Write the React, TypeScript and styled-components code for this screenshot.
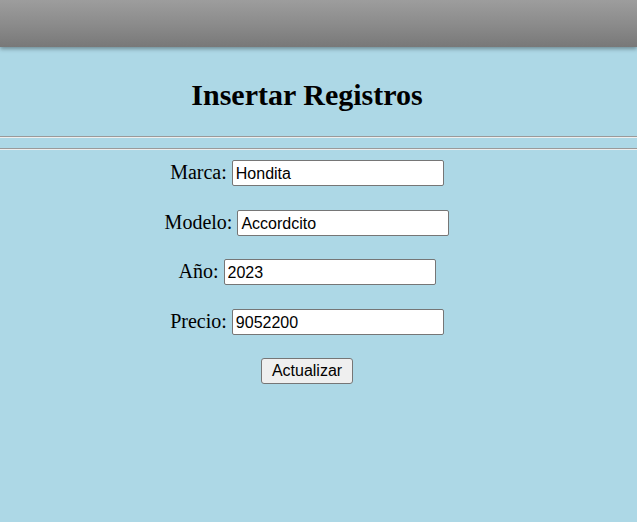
import React from "react";
import styled, { createGlobalStyle } from "styled-components";

const Global = createGlobalStyle`
  html, body {
    margin: 0;
    padding: 0;
    background: #add8e6;
    font-family: "Liberation Serif", "Times New Roman", serif;
  }
`;

const Header = styled.header`
  height: 47px;
  background: linear-gradient(to bottom, #9d9d9d 0%, #8a8a8a 55%, #787878 100%);
  box-shadow: 0 2px 4px rgba(0, 0, 0, 0.35);
  position: relative;
  z-index: 1;
`;

const TitleSection = styled.div`
  padding: 29px 23px 0 0;
  display: flex;
  justify-content: center;
`;

const Title = styled.h1`
  margin: 0;
  font-size: 30px;
  font-weight: bold;
  color: #000;
  line-height: 37px;
`;

const Rule = styled.hr<{ $top: number }>`
  margin: ${(p) => p.$top}px 0 0 0;
  height: 0;
  border: none;
  border-top: 1px solid #9a9a9a;
  border-bottom: 1px solid #eeeeee;
`;

const Form = styled.form`
  display: flex;
  flex-direction: column;
  align-items: center;
  padding: 10px 23px 0 0;
`;

const Row = styled.div`
  height: 49.5px;
  display: flex;
  align-items: baseline;
  justify-content: center;
`;

const Label = styled.label`
  font-size: 20px;
  color: #000;
  margin-right: 5px;
`;

const Input = styled.input`
  box-sizing: border-box;
  width: 212px;
  height: 26px;
  padding: 2px 3px 0;
  border: 1px solid #767676;
  border-radius: 2px;
  background: #fff;
  font-family: "Liberation Sans", Arial, sans-serif;
  font-size: 16px;
  color: #000;
  outline: none;
`;

const Button = styled.button`
  box-sizing: border-box;
  width: 92px;
  height: 26px;
  margin-top: 0;
  padding: 1px 6px;
  border: 1px solid #767676;
  border-radius: 3px;
  background: #efefef;
  font-family: "Liberation Sans", Arial, sans-serif;
  font-size: 16px;
  color: #000;
`;

const fields = [
  { label: "Marca:", value: "Hondita" },
  { label: "Modelo:", value: "Accordcito" },
  { label: "Año:", value: "2023" },
  { label: "Precio:", value: "9052200" },
];

export default function App() {
  return (
    <>
      <Global />
      <Header />
      <TitleSection>
        <Title>Insertar Registros</Title>
      </TitleSection>
      <Rule $top={23} />
      <Rule $top={10} />
      <Form onSubmit={(e) => e.preventDefault()}>
        {fields.map((f) => (
          <Row key={f.label}>
            <Label>{f.label}</Label>
            <Input type="text" defaultValue={f.value} />
          </Row>
        ))}
        <Button type="submit">Actualizar</Button>
      </Form>
    </>
  );
}
